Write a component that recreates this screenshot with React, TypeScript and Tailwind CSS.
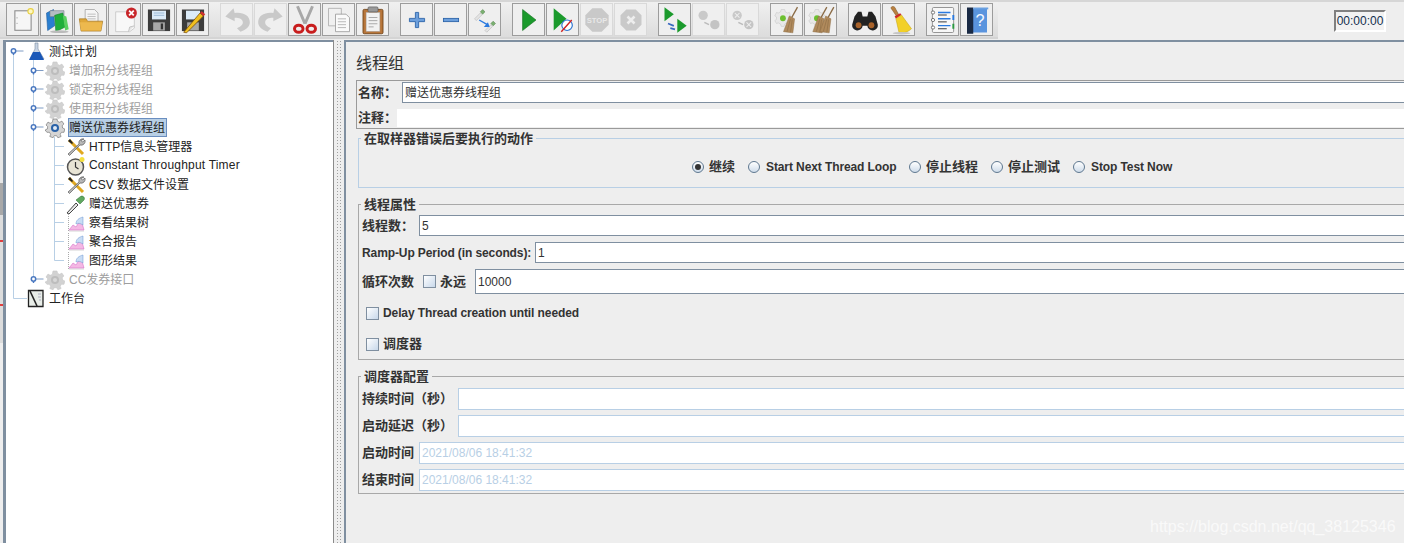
import type { ReactNode } from 'react';

const FONT = "font-['Liberation_Sans','Noto_Sans_CJK_SC',sans-serif]";

function Svg({ children, size = 26 }: { children: ReactNode; size?: number }) {
  return (
    <svg width={size} height={size} viewBox="0 0 24 24" fill="none">
      {children}
    </svg>
  );
}

const IconNew = () => (
  <Svg>
    <rect x="4.500" y="3.500" width="15" height="18" fill="#f6f6f6" stroke="#8d8d8d" />
    <circle cx="6.500" cy="10" r=".5" fill="#888" />
    <circle cx="6.500" cy="15" r=".5" fill="#888" />
    <circle cx="19" cy="4" r="2.500" fill="#fff8c0" stroke="#e8d040" />
  </Svg>
);
const IconTemplates = () => (
  <Svg size={28}>
    <path d="M3 6l6-3 1 14-6 4z" fill="#2a7fd0" stroke="#1b5a9c" strokeWidth=".5" />
    <path d="M6 4h12v5H6z" fill="#b4bcc4" stroke="#78808a" strokeWidth=".5" />
    <path d="M10 8l7-2 2 12-8 4z" fill="#1faf3a" stroke="#14802a" strokeWidth=".5" />
    <path d="M17 8l3 1 2 11-3 1z" fill="#5ad060" />
    <ellipse cx="14" cy="22" rx="8" ry="1.200" fill="#bbb" />
  </Svg>
);
const IconOpen = () => (
  <Svg size={28}>
    <path d="M7 3h8l3 3v8H7z" fill="#f5f5f5" stroke="#999" strokeWidth=".6" />
    <path d="M9 7h7M9 9h7M9 11h7" stroke="#aaa" strokeWidth=".6" />
    <path d="M2 11h6l1 2h13l-1.500 8.500H3.500z" fill="#e0a83a" stroke="#a87820" strokeWidth=".6" />
    <path d="M2.500 14h19l-1 7H3.500z" fill="#edb94e" />
  </Svg>
);
const IconClose = () => (
  <Svg size={28}>
    <path d="M4 5h12l4 4v10l-4 3H4z" fill="#f8f8f8" stroke="#c4c4c4" strokeWidth=".7" />
    <path d="M15 22l1-4 4-1" fill="#e4e4e4" stroke="#bbb" strokeWidth=".7" />
    <circle cx="17.500" cy="6" r="4.700" fill="#c8262a" />
    <path d="M15.500 4l4 4M19.500 4l-4 4" stroke="#fff" strokeWidth="1.500" />
  </Svg>
);
const IconSave = () => (
  <Svg size={28}>
    <path d="M2.500 3h19v18.500h-19z" fill="#3c3c3c" />
    <rect x="6" y="4" width="12" height="7.500" fill="#dcebf8" />
    <path d="M7.500 6h9M7.500 8h9" stroke="#8fb0d0" strokeWidth=".7" />
    <rect x="7" y="14" width="10" height="7" fill="#a8a8a8" />
    <rect x="13.500" y="15" width="2" height="5" fill="#333" />
  </Svg>
);
const IconSaveAs = () => (
  <Svg size={28}>
    <path d="M2.500 3h19v18.500h-19z" fill="#3c3c3c" />
    <rect x="6" y="4" width="12" height="7.500" fill="#dcebf8" />
    <rect x="7" y="14" width="10" height="7" fill="#a8a8a8" />
    <path d="M4 22.500L18 6l3 2.500L6.500 23z" fill="#f0c020" stroke="#704000" strokeWidth=".6" />
    <path d="M18 6l1.500-1.500 3 2.500L21 8.500z" fill="#d03030" />
  </Svg>
);
const IconUndo = () => (
  <Svg size={28}>
    <path d="M9 2L2 9l8 4v-3c4 0 7 1 7 4s-3 4-5 5l3 3c4-1 8-4 8-8 0-6-6-9-13-8z" fill="#c9c9c9" />
  </Svg>
);
const IconRedo = () => (
  <Svg size={28}>
    <path d="M15 2l7 7-8 4v-3c-4 0-7 1-7 4s3 4 5 5l-3 3c-4-1-8-4-8-8 0-6 6-9 13-8z" fill="#c9c9c9" />
  </Svg>
);
const IconCut = () => (
  <Svg size={30}>
    <path d="M6 1l6 14M18 1l-6 14" stroke="#a8a8a8" strokeWidth="2.400" />
    <ellipse cx="7" cy="19" rx="3.400" ry="2.800" stroke="#c81e1e" strokeWidth="2.400" />
    <ellipse cx="17" cy="19" rx="3.400" ry="2.800" stroke="#c81e1e" strokeWidth="2.400" />
  </Svg>
);
const IconCopy = () => (
  <Svg size={28}>
    <path d="M3 2h11v15H3z" fill="#f0f0f0" stroke="#aaa" strokeWidth=".7" />
    <path d="M9 7h9l3 3v12H9z" fill="#fafafa" stroke="#999" strokeWidth=".7" />
    <path d="M11 11h7M11 13.500h7M11 16h7M11 18.500h7" stroke="#aaa" strokeWidth=".7" />
  </Svg>
);
const IconPaste = () => (
  <Svg size={30}>
    <rect x="4" y="3.500" width="16" height="19.500" rx="1" fill="#b8763a" stroke="#6e4217" strokeWidth=".7" />
    <rect x="6.500" y="6" width="11" height="15" fill="#f2f2f2" stroke="#aaa" strokeWidth=".4" />
    <rect x="8" y="1.500" width="8" height="4" rx="1" fill="#999" stroke="#555" strokeWidth=".5" />
    <path d="M8.500 10h7M8.500 12.500h7M8.500 15h7M8.500 17.500h4" stroke="#aaa" strokeWidth=".8" />
  </Svg>
);
const IconPlus = () => (
  <Svg size={26}>
    <path d="M10.500 5h3v5.500H19v3h-5.500V19h-3v-5.500H5v-3h5.500z" fill="#6c9fdc" stroke="#2a62a8" strokeWidth=".8" />
  </Svg>
);
const IconMinus = () => (
  <Svg size={26}>
    <rect x="5" y="10.500" width="14" height="3" fill="#6c9fdc" stroke="#2a62a8" strokeWidth=".8" />
  </Svg>
);
const Pipette = ({ x, y }: { x: number; y: number }) => (
  <g transform={`translate(${x} ${y})`}>
    <path d="M0 9l5-5 1.500 1.500-5 5z" fill="#e4e4e4" stroke="#aaa" strokeWidth=".4" />
    <path d="M5 3l2 2 2-2-2-2z" fill="#7ab070" stroke="#4a7a44" strokeWidth=".4" />
  </g>
);
const IconToggle = () => (
  <Svg size={28}>
    <Pipette x={3} y={2} />
    <Pipette x={12} y={12} />
    <path d="M7 12l7 4" stroke="#2a7ae0" strokeWidth="1.200" />
    <path d="M11 18l5 0-1.500-4z" fill="#2a7ae0" />
  </Svg>
);
const IconRun = () => (
  <Svg size={28}>
    <path d="M6.500 3l11.500 9-11.500 9z" fill="#1b9a2c" stroke="#0f6e1c" strokeWidth=".5" />
  </Svg>
);
const IconRunNoPause = () => (
  <Svg size={28}>
    <path d="M4 2l11 9-11 10z" fill="#1b9a2c" />
    <circle cx="15.500" cy="16.500" r="4.500" fill="#fff" stroke="#2a72d0" />
    <path d="M10.500 22l9-10" stroke="#d02020" strokeWidth="1.200" />
  </Svg>
);
const IconStop = () => (
  <Svg size={28}>
    <path d="M8 2h8l6 6v8l-6 6H8l-6-6V8z" fill="#c9c9c9" />
    <text x="12" y="14.500" textAnchor="middle" fontSize="6.500" fontWeight="700" fill="#e8e8e8" fontFamily="Liberation Sans">STOP</text>
  </Svg>
);
const IconShutdown = () => (
  <Svg size={28}>
    <path d="M8 3h8l5 5v8l-5 5H8l-5-5V8z" fill="#c9c9c9" />
    <path d="M9 9l6 6M15 9l-6 6" stroke="#eee" strokeWidth="2.200" />
  </Svg>
);
const IconRemoteRun = () => (
  <Svg size={28}>
    <path d="M3 1l8 6-8 6z" fill="#1b9a2c" />
    <path d="M14 11l8 6-8 6z" fill="#1b9a2c" />
    <path d="M6 15l5 2M12 20l-4-1" stroke="#3a6ac0" strokeWidth="1.500" />
  </Svg>
);
const IconRemoteOff = ({ cross }: { cross?: boolean }) => (
  <Svg size={28}>
    <circle cx="7" cy="8" r="4" fill="#c9c9c9" />
    <circle cx="17" cy="16" r="4" fill="#c4c4c4" />
    <path d="M8 14l4 2" stroke="#bbb" strokeWidth="1.300" />
    {cross ? <path d="M5 6l4 4M9 6l-4 4M15 14l4 4M19 14l-4 4" stroke="#eee" strokeWidth=".9" /> : null}
  </Svg>
);
const Broom = ({ x = 0 }: { x?: number }) => (
  <g transform={`translate(${x} 0)`}>
    <path d="M21 1l-5 9" stroke="#8a6a44" strokeWidth="1.100" />
    <path d="M14 8.500l4.500 2.500L17 23l-8-1z" fill="#b08a5c" stroke="#8a6a44" strokeWidth=".4" />
    <path d="M15 11l-3 11M16.500 11.500l-1.500 11" stroke="#8a6a44" strokeWidth=".5" />
  </g>
);
const GearBit = () => (
  <g>
    <path d="M7 3h3l.5 2 2 1 1.500-.5 1 3-1.500 1 0 2 1.500 1-1.500 2.500-2-.5-1.500 1-.5 2H7l-.5-2-2-1-1.500.5-1.500-2.500L3 11.500v-2L1.500 8.500 3 5.500l1.500.5 2-1z" fill="#e8e8e8" stroke="#c0c0c0" strokeWidth=".4" />
    <circle cx="8.500" cy="10.500" r="2.500" fill="#6cc030" />
  </g>
);
const IconClear = () => (
  <Svg size={28}>
    <GearBit />
    <Broom />
  </Svg>
);
const IconClearAll = () => (
  <Svg size={28}>
    <GearBit />
    <Broom x={-4} />
    <Broom x={2} />
  </Svg>
);
const IconSearch = () => (
  <Svg size={28}>
    <path d="M3 9l3-4h3l1 4h4l1-4h3l3 4 2 7a4.500 4.500 0 0 1-9 1h-4a4.500 4.500 0 0 1-9-1z" fill="#222" />
    <circle cx="6.500" cy="16.500" r="2.500" fill="#a8622a" />
    <circle cx="17.500" cy="16.500" r="2.500" fill="#a8622a" />
  </Svg>
);
const IconSweep = () => (
  <Svg size={30}>
    <path d="M6 1.500c2-1 3 .5 3.500 2L12 8l-2 1-3-4.500C6 3 5 2.500 6 1.500z" fill="#b88040" stroke="#7a5020" strokeWidth=".4" />
    <path d="M8.500 9l4.500-2.500 1 1.500L9.500 11z" fill="#d02828" />
    <path d="M9.500 11l4.500-3 8 11c-3 3-8 4-10 3z" fill="#f2d028" stroke="#c0a010" strokeWidth=".4" />
    <ellipse cx="14" cy="22.500" rx="7" ry="1" fill="#c4c4c4" />
  </Svg>
);
const IconFunctions = () => (
  <Svg size={30}>
    <rect x="3.500" y="2" width="17" height="20" rx="1" fill="#f7f7f7" stroke="#888" strokeWidth=".7" />
    <rect x="19.500" y="8" width="1.500" height="4" fill="#2a7ae0" />
    <rect x="19.500" y="15" width="1.500" height="4" fill="#2a9a40" />
    <path d="M8 6h10M8 11h10M8 16.500h10" stroke="#2a7ae0" strokeWidth="1.100" />
    <path d="M8 8h7M8 13.500h7M8 19h7" stroke="#222" strokeWidth=".7" />
    <circle cx="4" cy="6" r="1.300" fill="#fff" stroke="#555" strokeWidth=".6" />
    <circle cx="4" cy="12" r="1.300" fill="#fff" stroke="#555" strokeWidth=".6" />
    <circle cx="4" cy="18" r="1.300" fill="#fff" stroke="#555" strokeWidth=".6" />
  </Svg>
);
const IconHelp = () => (
  <Svg size={30}>
    <path d="M4 3h16v19H4z" fill="#5a94de" />
    <path d="M4 2h5v21H4z" fill="#1a2a44" />
    <path d="M9 2h12v1.500H9z" fill="#6aa0e0" />
    <text x="14.500" y="17" textAnchor="middle" fontSize="13" fill="#f4f8ff" fontFamily="Liberation Sans">?</text>
  </Svg>
);

function Tool({ children, off }: { children: ReactNode; off?: boolean }) {
  return (
    <div
      className={`flex h-[33px] w-[33px] items-center justify-center border ${
        off ? 'border-[#d9d9d9]' : 'border-[#9c9c9c]'
      } bg-[#efefef]`}
    >
      {children}
    </div>
  );
}

const toolGroups: { icon: ReactNode; off?: boolean }[][] = [
  [
    { icon: <IconNew /> },
    { icon: <IconTemplates /> },
    { icon: <IconOpen /> },
    { icon: <IconClose /> },
    { icon: <IconSave /> },
    { icon: <IconSaveAs /> },
  ],
  [
    { icon: <IconUndo />, off: true },
    { icon: <IconRedo />, off: true },
    { icon: <IconCut /> },
    { icon: <IconCopy /> },
    { icon: <IconPaste /> },
  ],
  [{ icon: <IconPlus /> }, { icon: <IconMinus /> }, { icon: <IconToggle /> }],
  [
    { icon: <IconRun /> },
    { icon: <IconRunNoPause /> },
    { icon: <IconStop />, off: true },
    { icon: <IconShutdown />, off: true },
  ],
  [
    { icon: <IconRemoteRun /> },
    { icon: <IconRemoteOff />, off: true },
    { icon: <IconRemoteOff cross />, off: true },
  ],
  [{ icon: <IconClear /> }, { icon: <IconClearAll /> }],
  [{ icon: <IconSearch /> }, { icon: <IconSweep /> }],
  [{ icon: <IconFunctions /> }, { icon: <IconHelp /> }],
];

function Toolbar() {
  return (
    <div className="flex h-[40px] border-t-2 border-[#d6d6d6] bg-[#eeeeee]">
      <div className="flex h-[37px] w-[998px] gap-[11px] border-b-2 border-[#d4d4d4] bg-gradient-to-b from-[#f0f0f0] to-[#dcdcdc] pl-[6px] pt-[1px]">
        {toolGroups.map((group, i) => (
          <div key={i} className="flex gap-px">
            {group.map((tool, j) => (
              <Tool key={j} off={tool.off}>
                {tool.icon}
              </Tool>
            ))}
          </div>
        ))}
      </div>
      <div className="ml-[336px] mt-[8px] flex h-[22px] w-[52px] items-center justify-center border-2 border-b-white border-l-[#808080] border-r-white border-t-[#808080] bg-[#f2f2f2] text-[12px] text-[#14304e]">
        00:00:00
      </div>
    </div>
  );
}

const Gear = ({ on }: { on?: boolean }) => {
  const c = on ? '#d4d4d4' : '#d2d2d2';
  const s = on ? '#6a6a6a' : '#c8c8c8';
  return (
    <svg width="20" height="20" viewBox="0 0 20 20">
      <path
        d="M8 1h4l.6 2.400 2.100.9 2.200-1.200 2 2.900-1.700 1.700.4 2.300 2.200 1-.8 3.300-2.500 0-1.300 1.900.9 2.300-3.200 1.300-1.300-2.100h-2.300l-1.300 2.100-3.200-1.300.9-2.300-1.300-1.900-2.500 0L.1 12l2.200-1 .4-2.300L1 7l2-2.900 2.200 1.200 2.100-.9z"
        fill={c}
        stroke={s}
        strokeWidth=".6"
      />
      <circle cx="10" cy="10" r="4" fill={on ? '#2a62a8' : '#bdbdbd'} />
      <circle cx="10" cy="10" r="2" fill={on ? '#dfe9f5' : '#d8d8d8'} />
    </svg>
  );
};
const Flask = () => (
  <svg width="18" height="19" viewBox="0 0 18 19" className="shrink-0">
    <path d="M7 1h3v6l6 10H2l5-10z" fill="#c8d4e4" stroke="#7a8aa0" strokeWidth=".6" />
    <path d="M5 10h7l4 8H1z" fill="#1a58b8" />
  </svg>
);
const Tools = () => (
  <svg width="20" height="20" viewBox="0 0 20 20" className="shrink-0">
    <path d="M3 3l14 14" stroke="#e0a820" strokeWidth="3" />
    <path d="M2 4l2-2 3 4-1 1z" fill="#222" />
    <path d="M18 2a4 4 0 0 0-5 5L2 17l1.500 1.500L14 8a4 4 0 0 0 5-5l-2.500 2L15 3.500z" fill="#b9b9b9" stroke="#444" strokeWidth=".6" />
  </svg>
);
const Timer = () => (
  <svg width="20" height="20" viewBox="0 0 20 20" className="shrink-0">
    <circle cx="9.500" cy="11" r="8" fill="#e8e4d4" stroke="#555" strokeWidth="1.500" />
    <path d="M9.500 6v5l3 2" stroke="#333" strokeWidth="1.200" fill="none" />
    <circle cx="16" cy="3.500" r="2.500" fill="#f4e040" />
  </svg>
);
const Dropper = () => (
  <svg width="20" height="20" viewBox="0 0 20 20" className="shrink-0">
    <path d="M1 19l9-10 2 2-9 9z" fill="#e8e8e8" stroke="#333" strokeWidth=".9" />
    <path d="M10 6l4 4 4-4c1.500-2-1-5-3.500-3.500z" fill="#60a860" stroke="#2a6a30" strokeWidth=".5" />
  </svg>
);
const Chart = () => (
  <svg width="18" height="19" viewBox="0 0 18 19" className="shrink-0">
    <path d="M1.500 1v17H17" stroke="#aaa" strokeDasharray="1 1" fill="none" />
    <path d="M2 17l4-5 3 2 5-8 3 11z" fill="#f4b8e4" stroke="#d060c0" strokeWidth=".5" />
    <path d="M9 11c0-4 3-6 7-7v8c-3-2-5-2-7-1z" fill="#c8dcf4" stroke="#6a94d0" strokeWidth=".5" />
  </svg>
);
const Bench = () => (
  <svg width="18" height="19" viewBox="0 0 18 19" className="shrink-0">
    <path d="M1.500 1.500h14.500v16H1.500z" fill="#e8ede8" stroke="#222" strokeWidth="1.300" />
    <path d="M3 2l7 15" stroke="#222" strokeWidth="1.600" />
    <path d="M11 5h3M11 8h3M12 11h2" stroke="#88a" strokeWidth=".6" />
  </svg>
);

type Node = {
  label: string;
  pad: string;
  iconW: string;
  icon: ReactNode;
  gray?: boolean;
  selected?: boolean;
  wide?: boolean;
};

const nodes: Node[] = [
  { label: '测试计划', pad: 'pl-[22px]', iconW: 'w-[17px]', icon: <Flask /> },
  { label: '增加积分线程组', pad: 'pl-[39px]', iconW: 'w-[20px]', icon: <Gear />, gray: true },
  { label: '锁定积分线程组', pad: 'pl-[39px]', iconW: 'w-[20px]', icon: <Gear />, gray: true },
  { label: '使用积分线程组', pad: 'pl-[39px]', iconW: 'w-[20px]', icon: <Gear />, gray: true },
  { label: '赠送优惠券线程组', pad: 'pl-[39px]', iconW: 'w-[20px]', icon: <Gear on />, selected: true },
  { label: 'HTTP信息头管理器', pad: 'pl-[60px]', iconW: 'w-[19px]', icon: <Tools /> },
  { label: 'Constant Throughput Timer', pad: 'pl-[60px]', iconW: 'w-[19px]', icon: <Timer />, wide: true },
  { label: 'CSV 数据文件设置', pad: 'pl-[60px]', iconW: 'w-[19px]', icon: <Tools /> },
  { label: '赠送优惠券', pad: 'pl-[60px]', iconW: 'w-[19px]', icon: <Dropper /> },
  { label: '察看结果树', pad: 'pl-[60px]', iconW: 'w-[19px]', icon: <Chart /> },
  { label: '聚合报告', pad: 'pl-[60px]', iconW: 'w-[19px]', icon: <Chart /> },
  { label: '图形结果', pad: 'pl-[60px]', iconW: 'w-[19px]', icon: <Chart /> },
  { label: 'CC发券接口', pad: 'pl-[39px]', iconW: 'w-[20px]', icon: <Gear />, gray: true },
  { label: '工作台', pad: 'pl-[21px]', iconW: 'w-[18px]', icon: <Bench /> },
];

// guide lines under the rows; coordinates are page x and page y minus 40
function TreeLines() {
  const handle = (x: number, y: number) => (
    <g key={`${x}-${y}`}>
      <path d={`M${x + 2} ${y}h8`} stroke="#7f9cc4" />
      <path d={`M${x} ${y}v4`} stroke="#4a78c0" strokeWidth="1.400" />
      <circle cx={x} cy={y} r="2.200" fill="#fff" stroke="#4a78c0" strokeWidth="1.500" />
    </g>
  );
  return (
    <svg className="absolute -left-[6px] -top-[2px]" width="100" height="270">
      <path d="M13.500 14V258.500H27" stroke="#b8cfe5" fill="none" />
      <path d="M33.500 14V239" stroke="#b8cfe5" fill="none" />
      <path d="M54.500 97V220.500M54.500 106.500H64M54.500 125.500H64M54.500 144.500H64M54.500 163.500H64M54.500 182.500H64M54.500 201.500H64M54.500 220.500H64" stroke="#b8cfe5" fill="none" />
      {[30.5, 49, 68, 87, 239].map((y) => handle(33.5, y))}
      {handle(13.5, 11)}
    </svg>
  );
}

function Tree() {
  return (
    <div className="relative h-full w-[327px] shrink-0 border-t-2 border-[#7f8fa0] bg-white">
      <TreeLines />
      <div className="relative">
        {nodes.map((node) => (
          <div key={node.label} className={`flex h-[19px] items-center ${node.pad}`}>
            <span className={`flex shrink-0 items-center justify-center ${node.iconW}`}>{node.icon}</span>
            <span
              className={`ml-[3px] whitespace-nowrap text-[12px] leading-[15px] ${
                node.wide ? 'py-px tracking-[0.2px]' : 'pt-[2px]'
              } ${node.gray ? 'text-[#9e9e9e]' : 'text-[#222]'} ${
                node.selected ? 'border border-[#6a8ec0] bg-[#b8cfe5] pr-px' : 'px-px'
              }`}
            >
              {node.label}
            </span>
          </div>
        ))}
      </div>
    </div>
  );
}

// what shows of the window behind, at the far left edge
function BackdropStrip() {
  return (
    <div className="flex h-full w-[6px] shrink-0 border-r-[3px] border-[#7f8fa0]">
      <div className="flex w-[3px] flex-col">
        <div className="h-[143px] bg-[#e6e6e6]" />
        <div className="h-[32px] bg-[#a8a8a8]" />
        <div className="h-[25px] bg-[#dcdcdc]" />
        <div className="h-[2px] bg-[#e04040]" />
        <div className="h-[62px] bg-[#dcdcdc]" />
        <div className="h-[2px] bg-[#e04040]" />
        <div className="h-[37px] bg-[#dcdcdc]" />
        <div className="flex-1 bg-[#eeeeee]" />
      </div>
    </div>
  );
}

// Chinese labels sit at 13px, Latin ones at 12px with slightly tighter spacing
function Label({ children, latin, className = '' }: { children: ReactNode; latin?: boolean; className?: string }) {
  return (
    <span
      className={`whitespace-nowrap font-bold text-[#333] ${
        latin ? 'text-[12px] tracking-[-0.1px]' : 'text-[13px]'
      } ${className}`}
    >
      {children}
    </span>
  );
}

function Field({ value, h, muted }: { value?: string; h: string; muted?: boolean }) {
  return (
    <div
      className={`flex min-w-0 flex-1 items-center bg-white pl-[2px] text-[12px] ${h} ${
        muted
          ? 'border border-[#b8cfe5] text-[#b8cfe5]'
          : 'border-b border-l border-t border-[#7f8fa0] text-[#333]'
      }`}
    >
      {value}
    </div>
  );
}

function PlainField({ h }: { h: string }) {
  return <div className={`min-w-0 flex-1 border border-[#b8cfe5] bg-white ${h}`} />;
}

function Radio({ label, on, latin, width }: { label: string; on?: boolean; latin?: boolean; width: string }) {
  return (
    <div className={`flex items-center ${width}`}>
      <span className="flex h-[12px] w-[12px] items-center justify-center rounded-full border border-[#5f7890] bg-gradient-to-b from-[#ffffff] to-[#cfdcea]">
        {on ? <span className="h-[6px] w-[6px] rounded-full bg-[#333]" /> : null}
      </span>
      <Label latin={latin} className={latin ? 'ml-[6px]' : 'ml-[5px]'}>
        {label}
      </Label>
    </div>
  );
}

function Check({ label, latin, className = '' }: { label: string; latin?: boolean; className?: string }) {
  return (
    <div className={`flex h-[14px] items-center ${className}`}>
      <span className="h-[13px] w-[13px] border border-[#7f8fa0] bg-gradient-to-br from-[#ffffff] to-[#c8d8ea]" />
      <Label latin={latin} className="ml-[4px]">
        {label}
      </Label>
    </div>
  );
}

function Group({
  title,
  blue,
  className,
  children,
}: {
  title: string;
  blue?: boolean;
  className: string;
  children: ReactNode;
}) {
  return (
    <fieldset
      className={`-mr-[4px] ml-[12px] border ${blue ? 'border-[#b8cfe5]' : 'border-[#a8a8a8]'} ${className}`}
    >
      <legend className="ml-[2px] h-[15px] px-[3px] text-[13px] font-bold leading-[15px] text-[#333]">{title}</legend>
      {children}
    </fieldset>
  );
}

function Form() {
  return (
    <div className="h-full min-w-0 flex-1 overflow-hidden border-l-2 border-t-2 border-[#7f8fa0] bg-[#eeeeee]">
      <h1 className="ml-[10px] mt-[11px] h-[27px] text-[16px] font-normal leading-[22px] text-[#333]">线程组</h1>

      <div className="ml-[10px] flex h-[49px] flex-col border-b border-l border-t border-[#9a9a9a]">
        <div className="flex h-[22px] items-center pl-px pt-px">
          <Label className="w-[44px]">名称：</Label>
          <Field h="h-[21px]" value="赠送优惠券线程组" />
        </div>
        <div className="mt-[6px] flex h-[18px] items-center pl-px">
          <Label className="w-[39px]">注释：</Label>
          <div className="h-[18px] flex-1 bg-white" />
        </div>
      </div>

      <Group title="在取样器错误后要执行的动作" blue className="mt-[2px] h-[57px]">
        <div className="flex pl-[333px] pt-[11px]">
          <Radio on label="继续" width="w-[56px]" />
          <Radio latin label="Start Next Thread Loop" width="w-[161px]" />
          <Radio label="停止线程" width="w-[82px]" />
          <Radio label="停止测试" width="w-[82px]" />
          <Radio latin label="Stop Test Now" width="w-[120px]" />
        </div>
      </Group>

      <Group title="线程属性" className="mt-[9px] h-[163px]">
        <div className="flex flex-col gap-[6px] pl-[3px] pt-[3px]">
          <div className="flex items-center">
            <Label className="w-[57px]">线程数：</Label>
            <Field h="h-[21px]" value="5" />
          </div>
          <div className="flex items-center">
            <Label latin className="w-[173px]">
              Ramp-Up Period (in seconds):
            </Label>
            <Field h="h-[21px]" value="1" />
          </div>
          <div className="flex items-center">
            <Label className="w-[61px]">循环次数</Label>
            <Check label="永远" className="w-[52px]" />
            <Field h="h-[25px]" value="10000" />
          </div>
        </div>
        <Check latin label="Delay Thread creation until needed" className="ml-[7px] mt-[12px]" />
        <Check label="调度器" className="ml-[7px] mt-[17px]" />
      </Group>

      <Group title="调度器配置" className="mt-[9px] h-[125px]">
        <div className="flex flex-col gap-[5px] pl-[3px] pt-[4px]">
          <div className="flex items-center">
            <Label className="w-[96px]">持续时间（秒）</Label>
            <PlainField h="h-[22px]" />
          </div>
          <div className="flex items-center">
            <Label className="w-[96px]">启动延迟（秒）</Label>
            <PlainField h="h-[22px]" />
          </div>
          <div className="flex items-center">
            <Label className="w-[57px]">启动时间</Label>
            <Field h="h-[22px]" muted value="2021/08/06 18:41:32" />
          </div>
          <div className="flex items-center">
            <Label className="w-[57px]">结束时间</Label>
            <Field h="h-[22px]" muted value="2021/08/06 18:41:32" />
          </div>
        </div>
      </Group>
    </div>
  );
}

export default function App() {
  return (
    <div className={`relative h-[543px] w-[1404px] overflow-hidden bg-[#eeeeee] ${FONT}`}>
      <Toolbar />
      <div className="flex h-[503px]">
        <BackdropStrip />
        <Tree />
        <div className="flex h-full w-[11px] shrink-0 justify-center border-l border-[#8a8a8a] bg-[#eeeeee]">
          <div className="h-full w-[6px] bg-[radial-gradient(#a0a0a0_0.7px,transparent_0.8px)] bg-[length:3px_3px]" />
        </div>
        <Form />
      </div>
      <span className="pointer-events-none absolute left-[1150px] top-[515px] text-[16px] text-white opacity-70">
        https://blog.csdn.net/qq_38125346
      </span>
    </div>
  );
}
